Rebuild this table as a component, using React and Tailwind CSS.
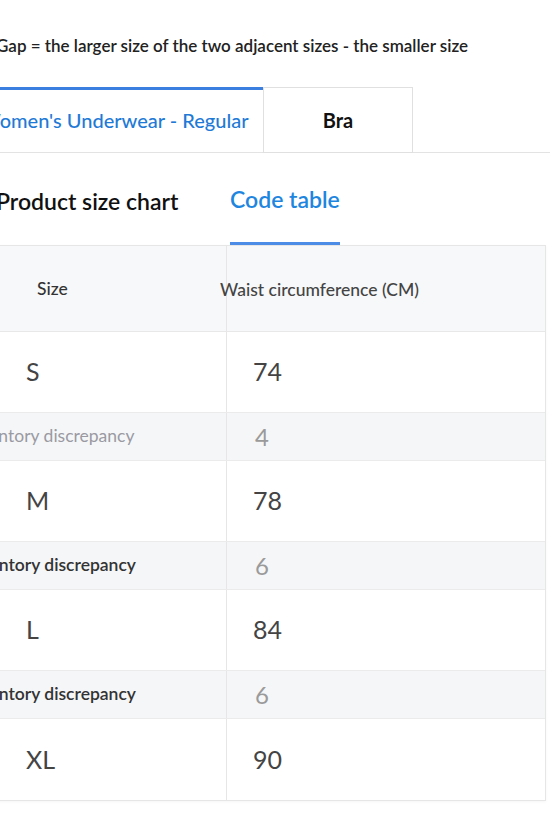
const rows = [
  { size: 'S', waist: '74' },
  { gap: '4', light: true },
  { size: 'M', waist: '78' },
  { gap: '6' },
  { size: 'L', waist: '84' },
  { gap: '6' },
  { size: 'XL', waist: '90' },
];

export default function App() {
  return (
    <div className="relative h-[825px] w-[550px] overflow-hidden bg-white font-['Lato','Liberation_Sans',sans-serif]">
      <p className="-ml-[4px] pt-[35px] text-[17px] leading-[22px] font-semibold text-[#222] whitespace-nowrap">
        Gap = the larger size of the two adjacent sizes - the smaller size
      </p>

      {/* category tabs */}
      <div className="mt-[30px] flex h-[66px] border-b border-[#e3e3e3]">
        <div className="-ml-[40px] flex w-[303px] items-center border-t-[3px] border-[#3b7fe0] pl-[20px] pb-[2px] text-[20px] font-medium text-[#1f7ad6] whitespace-nowrap">
          Women's Underwear - Regular
        </div>
        <div className="-mb-px flex w-[150px] items-center justify-center border border-b border-[#e0e0e0] text-[20px] font-bold text-[#111]">
          Bra
        </div>
      </div>

      {/* chart tabs */}
      <div className="flex h-[92px] items-end">
        <div className="-ml-[4px] flex h-full w-[234px] items-center pt-[4px] text-[23px] font-semibold text-[#111] whitespace-nowrap">
          Product size chart
        </div>
        <div className="flex h-full flex-col">
          <div className="flex flex-1 items-center pt-[4px] text-[23px] font-semibold text-[#1f86e0] whitespace-nowrap">Code table</div>
          <div className="h-[3px] w-full bg-[#4c8ce6]" />
        </div>
      </div>

      {/* table */}
      <div className="-ml-[40px] w-[586px] border border-[#e6e6e6] shadow-[0_1px_3px_rgba(0,0,0,0.04)]">
        <div className="flex h-[86px] border-b border-[#e8e8e8] bg-[#f7f8f9]">
          <div className="flex w-[266px] items-center border-r border-[#e6e6e6] pl-[76px] pt-[2px] text-[17.5px] font-medium text-[#333]">Size</div>
          <div className="flex flex-1 items-center -ml-[7px] pt-[4px] text-[17.5px] font-medium text-[#444] whitespace-nowrap">Waist circumference (CM)</div>
        </div>
        {rows.map((r, i) =>
          r.size ? (
            <div key={i} className={`flex h-[81px] ${i < rows.length - 1 ? 'border-b border-[#ebebeb]' : ''}`}>
              <div className="flex w-[266px] items-center border-r border-[#e6e6e6] pl-[65px] text-[25px] text-[#444]">{r.size}</div>
              <div className="flex flex-1 items-center pl-[26px] text-[25px] text-[#444]">{r.waist}</div>
            </div>
          ) : (
            <div key={i} className="flex h-[48px] border-b border-[#ebebeb] bg-[#f5f6f8]">
              <div
                className={`flex w-[266px] items-center border-r border-[#e6e6e6] pl-[5px] text-[17.5px] whitespace-nowrap ${
                  r.light ? 'text-[#9a9aa2]' : 'font-semibold text-[#333]'
                }`}
              >
                Inventory discrepancy
              </div>
              <div className="flex flex-1 items-center pl-[28px] text-[24px] text-[#9a9a9a]">{r.gap}</div>
            </div>
          )
        )}
      </div>
    </div>
  );
}
